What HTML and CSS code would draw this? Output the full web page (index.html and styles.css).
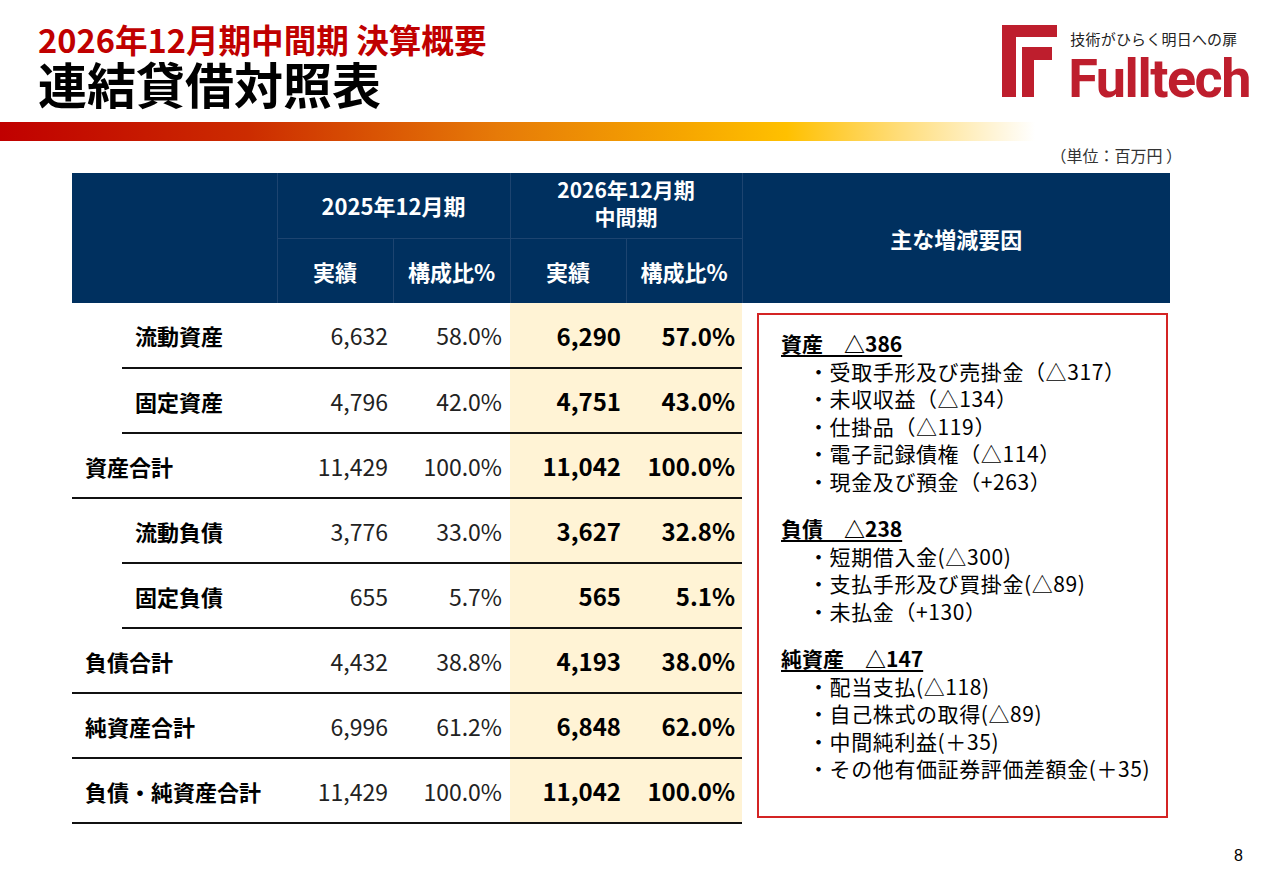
FILE: index.html
```html
<!DOCTYPE html>
<html lang="ja">
<head>
<meta charset="utf-8">
<title>連結貸借対照表</title>
<link rel="stylesheet" href="styles.css">
</head>
<body>
<div class="page">
  <header class="top">
    <div class="titles">
      <div class="subtitle">2026年12月期中間期 決算概要</div>
      <h1 class="title">連結貸借対照表</h1>
    </div>
    <div class="logo">
      <svg class="logo-mark" width="56" height="72" viewBox="0 0 56 72" aria-hidden="true">
        <path d="M0 0 H55 V12 H14 V72 H0 Z" fill="#be1e2d"/>
        <path d="M20 22 H50 V35 H32 V72 H20 Z" fill="#be1e2d"/>
      </svg>
      <div class="logo-text">
        <div class="tagline">技術がひらく明日への扉</div>
        <div class="brand">Fulltech</div>
      </div>
    </div>
  </header>
  <div class="grad"></div>
  <div class="unit">（単位：百万円 ）</div>

  <table class="bs">
    <colgroup>
      <col class="c-ind"><col class="c-lab"><col class="c-num"><col class="c-num2"><col class="c-num"><col class="c-num"><col class="c-side">
    </colgroup>
    <thead>
      <tr class="h1row">
        <th colspan="2" rowspan="2" class="h-blank"></th>
        <th colspan="2" class="h-year">2025年12月期</th>
        <th colspan="2" class="h-year h-two"><span class="hl">2026年12月期</span><span class="hl">中間期</span></th>
        <th rowspan="2" class="h-side">主な増減要因</th>
      </tr>
      <tr class="h2row">
        <th class="h-sub">実績</th>
        <th class="h-sub">構成比%</th>
        <th class="h-sub">実績</th>
        <th class="h-sub">構成比%</th>
      </tr>
    </thead>
    <tbody>
      <tr>
        <td class="ind"></td>
        <td class="lab line">流動資産</td>
        <td class="num line pr5">6,632</td>
        <td class="num line pr8">58.0%</td>
        <td class="num cur line pr5">6,290</td>
        <td class="num cur line pr7">57.0%</td>
        <td rowspan="8" class="side">
          <div class="box">
            <div class="sec">
              <div class="sec-h">資産　△386</div>
              <ul>
                <li>・受取手形及び売掛金（△317）</li>
                <li>・未収収益（△134）</li>
                <li>・仕掛品（△119）</li>
                <li>・電子記録債権（△114）</li>
                <li>・現金及び預金（+263）</li>
              </ul>
            </div>
            <div class="sec">
              <div class="sec-h">負債　△238</div>
              <ul>
                <li>・短期借入金(△300)</li>
                <li>・支払手形及び買掛金(△89)</li>
                <li>・未払金（+130）</li>
              </ul>
            </div>
            <div class="sec">
              <div class="sec-h">純資産　△147</div>
              <ul>
                <li>・配当支払(△118)</li>
                <li>・自己株式の取得(△89)</li>
                <li>・中間純利益(＋35)</li>
                <li>・その他有価証券評価差額金(＋35)</li>
              </ul>
            </div>
          </div>
        </td>
      </tr>
      <tr>
        <td class="ind"></td>
        <td class="lab line">固定資産</td>
        <td class="num line pr5">4,796</td>
        <td class="num line pr8">42.0%</td>
        <td class="num cur line pr5">4,751</td>
        <td class="num cur line pr7">43.0%</td>
      </tr>
      <tr>
        <td colspan="2" class="lab line">資産合計</td>
        <td class="num line pr5">11,429</td>
        <td class="num line pr8">100.0%</td>
        <td class="num cur line pr5">11,042</td>
        <td class="num cur line pr7">100.0%</td>
      </tr>
      <tr>
        <td class="ind"></td>
        <td class="lab line">流動負債</td>
        <td class="num line pr5">3,776</td>
        <td class="num line pr8">33.0%</td>
        <td class="num cur line pr5">3,627</td>
        <td class="num cur line pr7">32.8%</td>
      </tr>
      <tr>
        <td class="ind"></td>
        <td class="lab line">固定負債</td>
        <td class="num line pr5">655</td>
        <td class="num line pr8">5.7%</td>
        <td class="num cur line pr5">565</td>
        <td class="num cur line pr7">5.1%</td>
      </tr>
      <tr>
        <td colspan="2" class="lab line">負債合計</td>
        <td class="num line pr5">4,432</td>
        <td class="num line pr8">38.8%</td>
        <td class="num cur line pr5">4,193</td>
        <td class="num cur line pr7">38.0%</td>
      </tr>
      <tr>
        <td colspan="2" class="lab line">純資産合計</td>
        <td class="num line pr5">6,996</td>
        <td class="num line pr8">61.2%</td>
        <td class="num cur line pr5">6,848</td>
        <td class="num cur line pr7">62.0%</td>
      </tr>
      <tr>
        <td colspan="2" class="lab line">負債・純資産合計</td>
        <td class="num line pr5">11,429</td>
        <td class="num line pr8">100.0%</td>
        <td class="num cur line pr5">11,042</td>
        <td class="num cur line pr7">100.0%</td>
      </tr>
    </tbody>
  </table>
  <div class="pageno">8</div>
</div>
</body>
</html>
```
FILE: styles.css
```css
* { box-sizing: border-box; }
html, body { margin: 0; padding: 0; background: #fff; }
body {
  font-family: "Noto Sans CJK JP", "Noto Sans", sans-serif;
  color: #000;
}
.page {
  width: 1280px;
  height: 886px;
  overflow: hidden;
}

/* header */
.top {
  display: flex;
  justify-content: space-between;
  align-items: flex-start;
  padding: 19px 30px 0 38px;
  height: 114px;
}
.subtitle {
  color: #c00000;
  font-weight: 700;
  font-size: 32.6px;
  line-height: 40px;
}
.title {
  margin: 4px 0 0;
  font-family: "Liberation Sans", "Noto Sans CJK JP", sans-serif;
  font-weight: 700;
  font-size: 49px;
  line-height: 48px;
}
.logo {
  display: flex;
  align-items: flex-start;
  gap: 10px;
  padding-top: 6px;
}
.logo-mark { display: block; }
.logo-text {
  display: flex;
  flex-direction: column;
  padding-top: 5px;
}
.tagline {
  font-size: 15px;
  line-height: 18px;
  color: #222;
  letter-spacing: 0.2px;
  padding-left: 2px;
}
.brand {
  font-family: Roboto, "Liberation Sans", sans-serif;
  font-weight: 700;
  font-size: 54px;
  line-height: 56px;
  color: #be1e2d;
  letter-spacing: -1.5px;
  margin-top: 3px;
}

.grad {
  margin-top: 8px;
  width: 1035px;
  height: 19px;
  background: linear-gradient(to right,
    #c00000 0%,
    #cc2c00 24%,
    #e67a08 48%,
    #f6a600 66%,
    #ffc000 76%,
    #ffdd7a 87%,
    #ffffff 100%);
}
.unit {
  margin-top: 3px;
  text-align: right;
  padding-right: 98px;
  font-size: 16px;
  line-height: 22px;
  color: #333;
}

/* table */
.bs {
  margin: 7px 0 0 72px;
  border-collapse: collapse;
  table-layout: fixed;
  width: 1098px;
}
.c-ind { width: 50px; }
.c-lab { width: 155px; }
.c-num { width: 116px; }
.c-num2 { width: 117px; }
.c-side { width: 428px; }

.bs th {
  background: #00305f;
  color: #fff;
  font-weight: 700;
  font-size: 22px;
  padding: 0;
  text-align: center;
  height: 65px;
  border: 1px solid #1d4470;
}
.bs th.h-blank { border-left: 0; border-top: 0; border-bottom: 0; }
.bs thead tr:first-child th { border-top: 0; }
.bs thead tr:last-child th { border-bottom: 0; }
.bs th.h-side { border-right: 0; border-bottom: 0; }
.bs th.h-two { font-size: 21px; padding-bottom: 4px; }
.hl { display: block; line-height: 27.4px; }

.bs td {
  height: 65px;
  padding: 0;
  font-size: 23px;
  vertical-align: middle;
}
.bs td.line { border-bottom: 2px solid #111; }
.bs td.lab {
  font-weight: 700;
  padding-left: 13px;
  font-size: 22px;
  white-space: nowrap;
}
.bs td.num {
  text-align: right;
  font-weight: 400;
  color: #222;
}
.bs td.cur {
  background: #fff3d5;
  font-weight: 700;
  color: #000;
  font-size: 24px;
}
.pr5 { padding-right: 5px !important; }
.pr7 { padding-right: 7px !important; }
.pr8 { padding-right: 8px !important; }

.bs td.side {
  vertical-align: top;
  padding: 10px 0 0 15px;
  height: auto;
}
.box {
  width: 411px;
  height: 505px;
  border: 2px solid #d42424;
  padding: 15px 0 0 22px;
  font-size: 21px;
  line-height: 27.5px;
}
.sec + .sec { margin-top: 20px; }
.sec-h {
  font-weight: 700;
  text-decoration: underline;
  text-underline-offset: 3px;
  text-decoration-thickness: 1.5px;
}
.sec ul {
  margin: 0;
  padding: 0 0 0 27px;
  list-style: none;
  letter-spacing: 0.6px;
}
.sec li { white-space: nowrap; }

.pageno {
  text-align: right;
  padding-right: 37px;
  margin-top: 22px;
  font-size: 16px;
  line-height: 20px;
  font-family: "Liberation Sans", sans-serif;
}
```
